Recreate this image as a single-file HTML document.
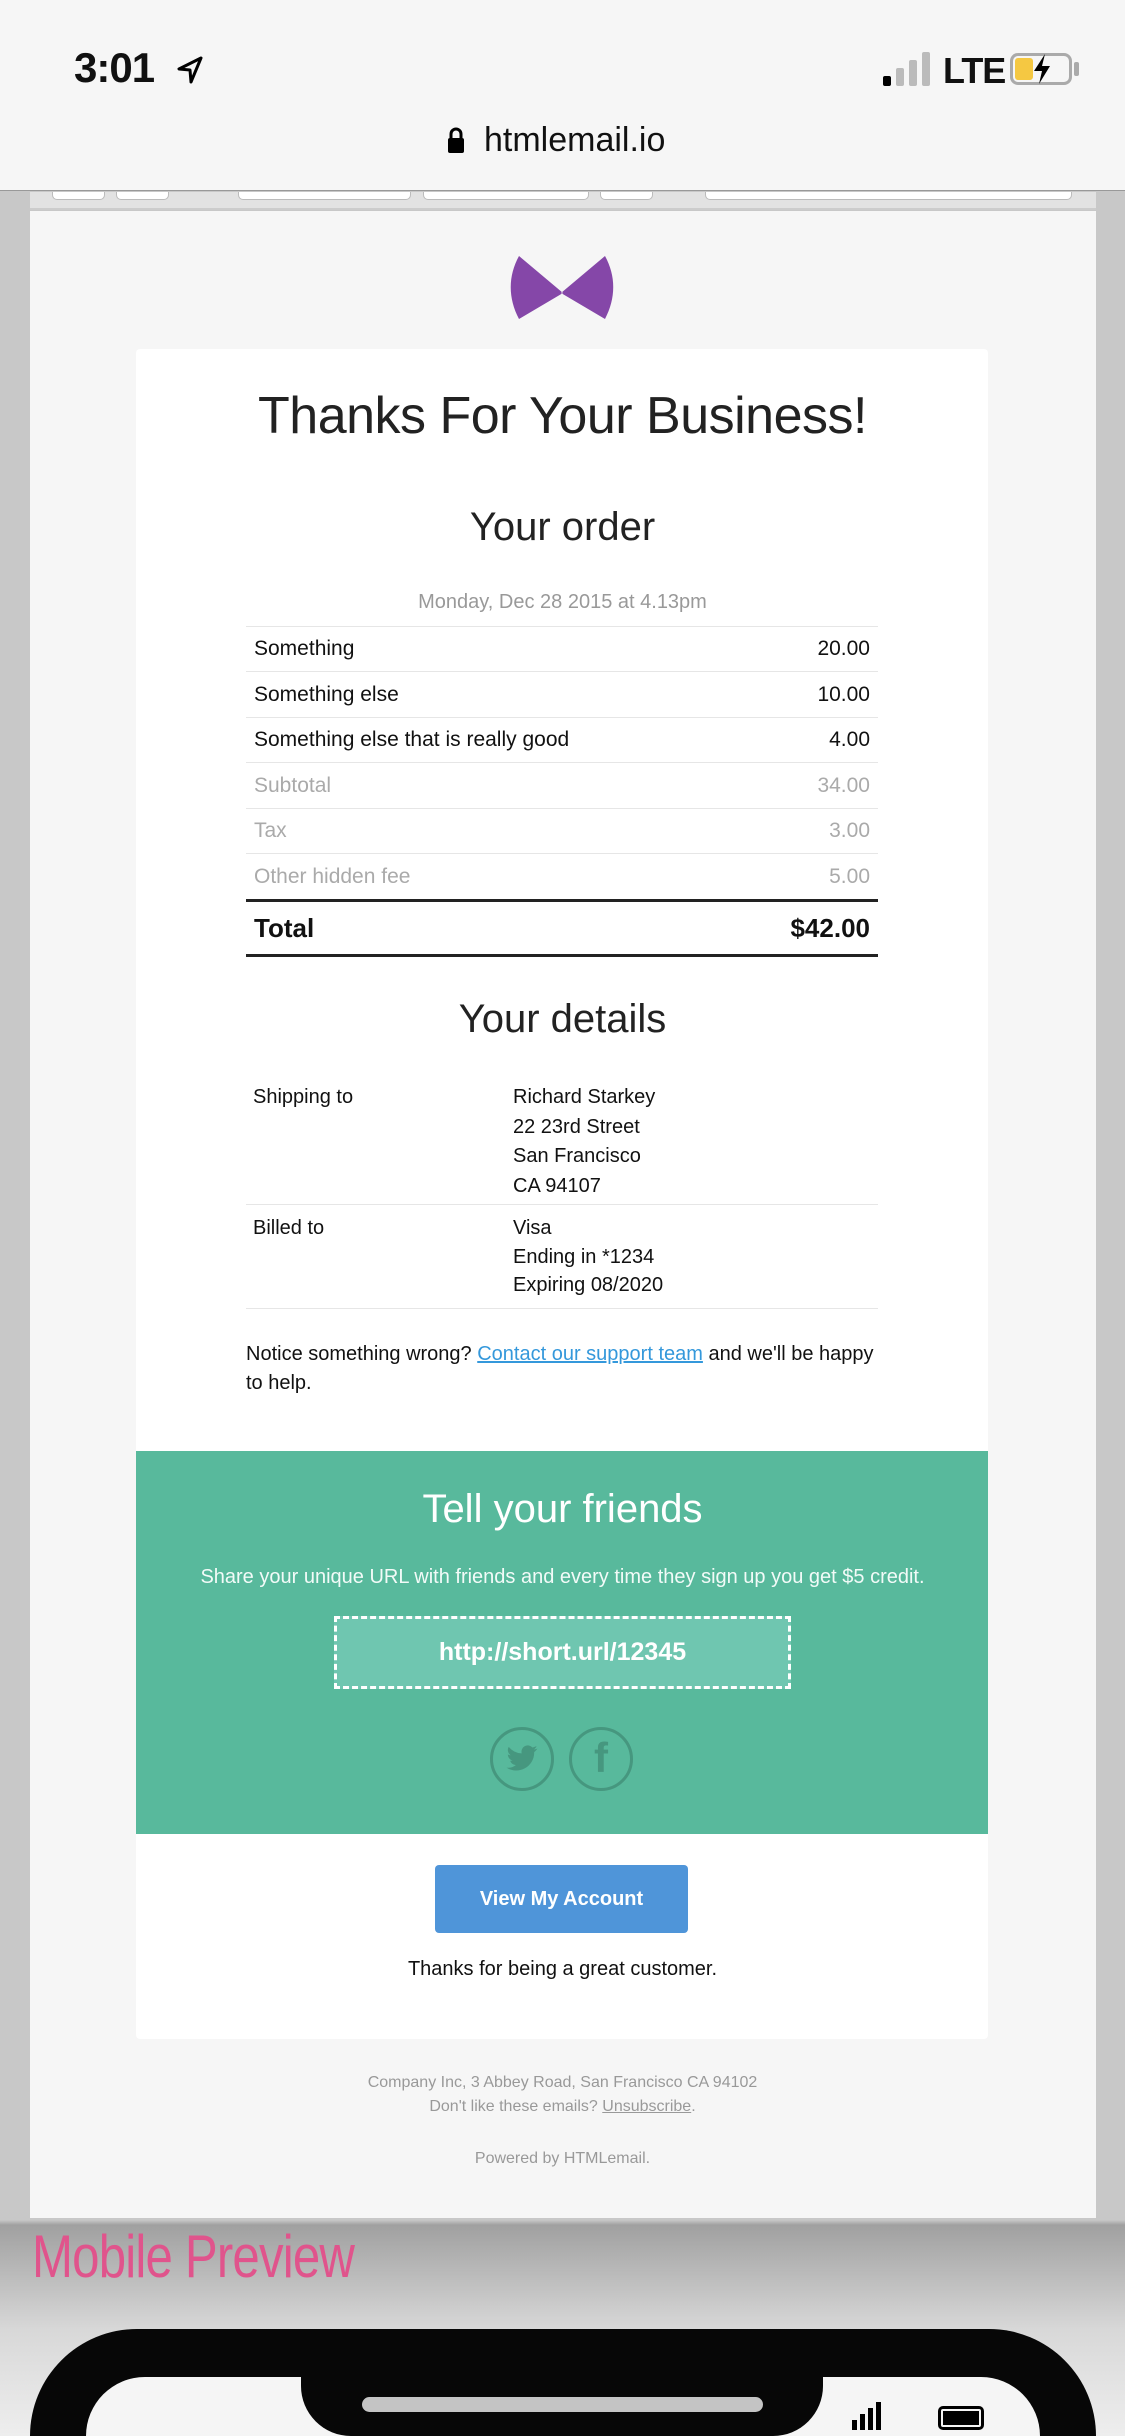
<!DOCTYPE html>
<html style="width:1125px;height:2436px;overflow:hidden"><head><meta charset="utf-8"><style>
*{margin:0;padding:0;box-sizing:border-box}
body{width:1125px;height:2436px;overflow:hidden;font-family:"Liberation Sans",Arial,sans-serif;background:#d9d9d9;position:relative;color:#111}
.abs{position:absolute}
.c{text-align:center;left:0;right:0}
</style></head><body>
<div class="abs" style="left:0;top:0;width:1125px;height:2436px;background:linear-gradient(#c8c8c8 0,#c8c8c8 2220px,#a0a0a0 2225px,#d8d8d8 2330px,#eee 2436px)"></div>
<div class="abs" style="left:0;top:0;width:1125px;height:191px;background:#f6f6f6;border-bottom:1px solid #999"></div>
<div class="abs" style="left:74px;top:44px;font-size:42px;font-weight:bold;letter-spacing:-1px">3:01</div>
<svg class="abs" style="left:176px;top:55px" width="28" height="30" viewBox="0 0 28 30"><path d="M25 3 L3 14 L14 15 L15 27 Z" fill="none" stroke="#000" stroke-width="3" stroke-linejoin="round"/></svg>
<div class="abs" style="left:883px;top:76px;width:8px;height:10px;background:#000;border-radius:2px"></div>
<div class="abs" style="left:896px;top:68px;width:8px;height:18px;background:#bbb;border-radius:2px"></div>
<div class="abs" style="left:909px;top:60px;width:8px;height:26px;background:#bbb;border-radius:2px"></div>
<div class="abs" style="left:922px;top:52px;width:8px;height:34px;background:#bbb;border-radius:2px"></div>
<div class="abs" style="left:943px;top:50px;font-size:36px;font-weight:bold;letter-spacing:-1px">LTE</div>
<div class="abs" style="left:1010px;top:53px;width:62px;height:32px;border:3px solid #aaa;border-radius:8px"></div>
<div class="abs" style="left:1015px;top:58px;width:18px;height:22px;background:#f5c842;border-radius:3px"></div>
<div class="abs" style="left:1074px;top:62px;width:5px;height:14px;background:#aaa;border-radius:2px"></div>
<svg class="abs" style="left:1030px;top:52px" width="24" height="34" viewBox="0 0 24 34"><path d="M15 2 L4 19 L12 19 L9 32 L20 14 L12 14 Z" fill="#000"/></svg>
<svg class="abs" style="left:447px;top:126px" width="18" height="28" viewBox="0 0 18 28"><path d="M4 12 V8 a5 5 0 0 1 10 0 V12" fill="none" stroke="#000" stroke-width="3"/><rect x="1" y="12" width="16" height="15" rx="2" fill="#000"/></svg>
<div class="abs" style="left:484px;top:121px;font-size:34px">htmlemail.io</div>
<div class="abs" style="left:30px;top:192px;width:1066px;height:18px;background:#e2e2e2;border-bottom:2px solid #ccc"></div>
<div class="abs" style="left:52px;top:192px;width:53px;height:8px;border:1px solid #bbb;border-top:none;border-radius:0 0 5px 5px;background:#fff"></div>
<div class="abs" style="left:116px;top:192px;width:53px;height:8px;border:1px solid #bbb;border-top:none;border-radius:0 0 5px 5px;background:#fff"></div>
<div class="abs" style="left:238px;top:192px;width:173px;height:8px;border:1px solid #bbb;border-top:none;border-radius:0 0 5px 5px;background:#fff"></div>
<div class="abs" style="left:423px;top:192px;width:166px;height:8px;border:1px solid #bbb;border-top:none;border-radius:0 0 5px 5px;background:#fff"></div>
<div class="abs" style="left:600px;top:192px;width:53px;height:8px;border:1px solid #bbb;border-top:none;border-radius:0 0 5px 5px;background:#fff"></div>
<div class="abs" style="left:705px;top:192px;width:367px;height:8px;border:1px solid #bbb;border-top:none;border-radius:0 0 5px 5px;background:#fff"></div>
<div class="abs" style="left:30px;top:211px;width:1066px;height:2007px;background:#f6f6f6"></div>
<svg class="abs" style="left:508px;top:256px" width="108" height="64" viewBox="0 0 108 64"><path d="M11 0 L55 37 L11 63 C0 42 0 20 11 0Z M97 0 L53 37 L97 63 C108 42 108 20 97 0Z" fill="#8547a8"/></svg>
<div class="abs" style="left:136px;top:349px;width:852px;height:1690px;background:#fff;border-radius:4px"></div>
<div class="abs c" style="top:386px;font-size:52px;font-weight:300;color:#222;letter-spacing:-0.5px">Thanks For Your Business!</div>
<div class="abs c" style="top:505px;font-size:40px;color:#222">Your order</div>
<div class="abs c" style="top:591px;font-size:20px;color:#999">Monday, Dec 28 2015 at 4.13pm</div>
<div class="abs" style="left:246px;top:626px;width:632px;font-size:21px">
 <div style="height:45px;border-top:1px solid #e6e6e6;display:flex;justify-content:space-between;align-items:center;padding:0 8px">Something<span>20.00</span></div>
 <div style="height:46px;border-top:1px solid #e6e6e6;display:flex;justify-content:space-between;align-items:center;padding:0 8px">Something else<span>10.00</span></div>
 <div style="height:45px;border-top:1px solid #e6e6e6;display:flex;justify-content:space-between;align-items:center;padding:0 8px">Something else that is really good<span>4.00</span></div>
 <div style="height:46px;border-top:1px solid #e6e6e6;display:flex;justify-content:space-between;align-items:center;padding:0 8px;color:#aaa">Subtotal<span>34.00</span></div>
 <div style="height:45px;border-top:1px solid #e6e6e6;display:flex;justify-content:space-between;align-items:center;padding:0 8px;color:#aaa">Tax<span>3.00</span></div>
 <div style="height:46px;border-top:1px solid #e6e6e6;display:flex;justify-content:space-between;align-items:center;padding:0 8px;color:#aaa">Other hidden fee<span>5.00</span></div>
 <div style="height:58px;border-top:3px solid #222;border-bottom:3px solid #222;display:flex;justify-content:space-between;align-items:center;padding:0 8px;font-weight:bold;font-size:26px">Total<span>$42.00</span></div>
</div>
<div class="abs c" style="top:997px;font-size:40px;color:#222">Your details</div>
<div class="abs" style="left:253px;top:1083px;font-size:20px;line-height:29px">Shipping to</div>
<div class="abs" style="left:513px;top:1083px;font-size:20px;line-height:29.5px">Richard Starkey<br>22 23rd Street<br>San Francisco<br>CA 94107</div>
<div class="abs" style="left:246px;top:1204px;width:632px;border-top:1px solid #e6e6e6"></div>
<div class="abs" style="left:253px;top:1214px;font-size:20px;line-height:29px">Billed to</div>
<div class="abs" style="left:513px;top:1214px;font-size:20px;line-height:28.5px">Visa<br>Ending in *1234<br>Expiring 08/2020</div>
<div class="abs" style="left:246px;top:1308px;width:632px;border-top:1px solid #e6e6e6"></div>
<div class="abs" style="left:246px;top:1340px;width:640px;font-size:20px;line-height:29px">Notice something wrong? <span style="color:#3498db;text-decoration:underline">Contact our support team</span> and we'll be happy to help.</div>
<div class="abs" style="left:136px;top:1451px;width:852px;height:383px;background:#58b99c"></div>
<div class="abs c" style="top:1487px;font-size:40px;color:#fff">Tell your friends</div>
<div class="abs c" style="top:1566px;font-size:20px;color:#f2fbf8">Share your unique URL with friends and every time they sign up you get $5 credit.</div>
<div class="abs" style="left:334px;top:1616px;width:457px;height:73px;background:#6fc6b0;border:3px dashed #fff;color:#fff;font-weight:bold;font-size:25px;text-align:center;line-height:67px">http://short.url/12345</div>
<div class="abs" style="left:490px;top:1727px;width:64px;height:64px;border:3px solid #46977f;border-radius:50%"></div>
<div class="abs" style="left:569px;top:1727px;width:64px;height:64px;border:3px solid #46977f;border-radius:50%"></div>
<svg class="abs" style="left:505px;top:1745px" width="34" height="28" viewBox="0 0 24 20"><path d="M23 2.5c-.8.4-1.7.6-2.6.7.9-.6 1.6-1.4 2-2.5-.9.5-1.9.9-2.9 1.1A4.5 4.5 0 0 0 11.8 6 12.8 12.8 0 0 1 2.5 1.3a4.5 4.5 0 0 0 1.4 6c-.7 0-1.4-.2-2-.6 0 2.2 1.600 4 3.6 4.4-.7.2-1.4.2-2 .1.6 1.8 2.2 3.1 4.2 3.1A9 9 0 0 1 1 16.2 12.8 12.8 0 0 0 20.7 5.4V5c.9-.6 1.6-1.4 2.3-2.5z" fill="#46977f"/></svg>
<div class="abs" style="left:569px;top:1734px;width:64px;text-align:center;font-size:42px;font-weight:bold;color:#46977f">f</div>
<div class="abs" style="left:435px;top:1865px;width:253px;height:68px;background:#4f95d9;border-radius:4px;color:#fff;font-weight:bold;font-size:20px;text-align:center;line-height:68px">View My Account</div>
<div class="abs c" style="top:1958px;font-size:20px">Thanks for being a great customer.</div>
<div class="abs c" style="top:2071px;font-size:16px;color:#999;line-height:24px">Company Inc, 3 Abbey Road, San Francisco CA 94102<br>Don't like these emails? <span style="text-decoration:underline">Unsubscribe</span>.</div>
<div class="abs c" style="top:2150px;font-size:16px;color:#999">Powered by HTMLemail.</div>
<div class="abs" style="left:32px;top:2222px;font-size:60px;color:#e0548c;letter-spacing:-1px;transform:scaleX(0.82);transform-origin:0 0">Mobile Preview</div>
<div class="abs" style="left:30px;top:2329px;width:1066px;height:107px;background:#070707;border-radius:160px 160px 0 0"></div>
<div class="abs" style="left:86px;top:2377px;width:954px;height:59px;background:#f5f5f5;border-radius:110px 110px 0 0"></div>
<div class="abs" style="left:301px;top:2360px;width:522px;height:76px;background:#070707;border-radius:0 0 50px 50px"></div>
<div class="abs" style="left:362px;top:2397px;width:401px;height:15px;background:#c4c4c4;border-radius:8px"></div>
<div class="abs" style="left:852px;top:2420px;width:5px;height:10px;background:#000"></div>
<div class="abs" style="left:860px;top:2414px;width:5px;height:16px;background:#000"></div>
<div class="abs" style="left:868px;top:2408px;width:5px;height:22px;background:#000"></div>
<div class="abs" style="left:876px;top:2402px;width:5px;height:28px;background:#000"></div>
<div class="abs" style="left:938px;top:2406px;width:46px;height:24px;border:3px solid #000;border-radius:5px;padding:2px"><div style="width:100%;height:100%;background:#000"></div></div>
</body></html>
